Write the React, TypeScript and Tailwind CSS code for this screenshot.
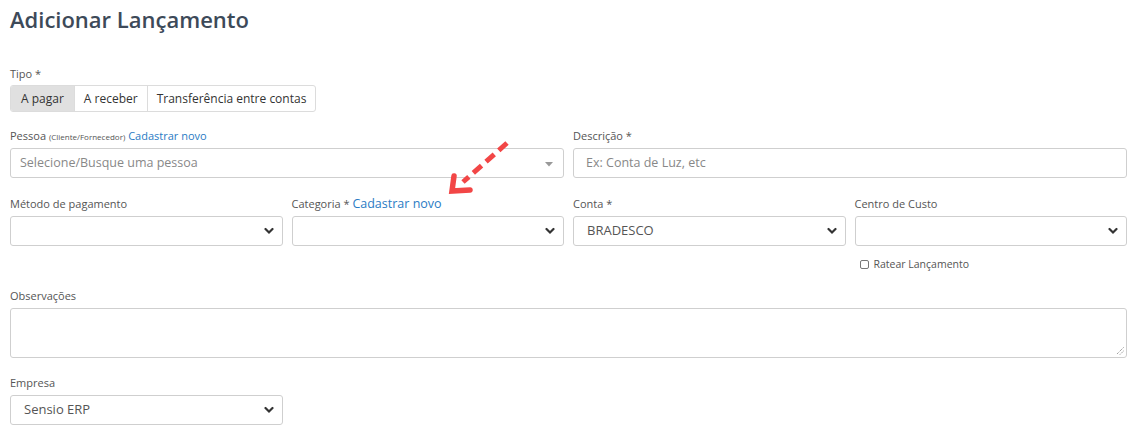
import React from "react";

function Chevron() {
  return (
    <svg width="10" height="7" viewBox="0 0 10 7" className="absolute right-[8px] top-1/2 -translate-y-1/2">
      <path d="M1.5 1.5 L5 5 L8.5 1.5" fill="none" stroke="#333" strokeWidth="2.2" strokeLinecap="round" />
    </svg>
  );
}

function Select({ value }: { value?: string }) {
  return (
    <div className="relative h-[30px] w-full rounded-[3px] border border-[#cfcfcf] bg-white">
      <span className="absolute left-[13px] top-1/2 -translate-y-1/2 text-[13px] font-normal text-[#555]">{value}</span>
      <Chevron />
    </div>
  );
}

function Label({ children }: { children: React.ReactNode }) {
  return <div className="mb-[5px] h-[14px] text-[11px] leading-[14px] text-[#555]">{children}</div>;
}

export default function App() {
  return (
    <div className="min-h-[441px] bg-white pl-[10px] pr-[7px] pt-[3px]" style={{ fontFamily: '"Open Sans", "Noto Sans", sans-serif' }}>
      <h1 className="text-[22px] font-semibold leading-[32px] text-[#3d4a59]">Adicionar Lançamento</h1>

      <div className="mt-[32px]">
        <Label>Tipo *</Label>
        <div className="-mt-[1px] flex h-[27px] w-fit overflow-hidden rounded-[3px] border border-[#dcdcdc] text-[12px] text-[#333]">
          <div className="flex items-center bg-[#e0e0e0] px-[10px]">A pagar</div>
          <div className="flex items-center border-l border-[#dcdcdc] px-[9px]">A receber</div>
          <div className="flex items-center border-l border-[#dcdcdc] px-[9px]">Transferência entre contas</div>
        </div>
      </div>

      <div className="relative mt-[17px] grid grid-cols-2 gap-x-[9px]">
        <div>
          <Label>
            Pessoa <span className="text-[8px]">(Cliente/Fornecedor)</span>{" "}
            <span className="text-[#2a7bc4]">Cadastrar novo</span>
          </Label>
          <div className="relative h-[30px] rounded-[3px] border border-[#cfcfcf] bg-white">
            <span className="absolute left-[9px] top-1/2 -translate-y-1/2 text-[12.5px] text-[#888]">Selecione/Busque uma pessoa</span>
            <svg width="8" height="5" viewBox="0 0 8 5" className="absolute right-[10px] top-[13px]">
              <path d="M0 0 H8 L4 4.5 Z" fill="#999" />
            </svg>
          </div>
        </div>
        <div>
          <Label>Descrição *</Label>
          <div className="relative h-[30px] rounded-[3px] border border-[#cfcfcf] bg-white">
            <span className="absolute left-[12px] top-1/2 -translate-y-1/2 text-[12.5px] text-[#888]">Ex: Conta de Luz, etc</span>
          </div>
        </div>

        {/* seta vermelha apontando pro "Cadastrar novo" da categoria */}
        <svg width="80" height="75" viewBox="0 0 80 75" className="pointer-events-none absolute left-[426px] top-0">
          <line x1="71" y1="14" x2="27" y2="53" stroke="#f24646" strokeWidth="5" strokeDasharray="11 6" strokeLinecap="butt" />
          <path d="M18 47 L16 62 L34 61" fill="none" stroke="#f24646" strokeWidth="5.5" strokeLinejoin="miter" strokeLinecap="round" />
        </svg>
      </div>

      <div className="mt-[19px] grid grid-cols-4 gap-x-[9px]">
        <div>
          <Label>Método de pagamento</Label>
          <Select />
        </div>
        <div>
          <div className="mb-[5px] -mt-[1px] h-[15px] text-[11px] leading-[15px] text-[#555]">
            Categoria * <span className="text-[12.5px] text-[#2a7bc4]">Cadastrar novo</span>
          </div>
          <Select />
        </div>
        <div>
          <Label>Conta *</Label>
          <Select value="BRADESCO" />
        </div>
        <div>
          <Label>Centro de Custo</Label>
          <Select />
          <div className="mt-[11px] flex items-center gap-[5px] pl-[5px] text-[10.5px] text-[#555]">
            <span className="inline-block h-[9px] w-[9px] rounded-[2px] border border-[#777]" />
            Ratear Lançamento
          </div>
        </div>
      </div>

      <div className="mt-[16px]">
        <Label>Observações</Label>
        <div className="relative h-[50px] rounded-[3px] border border-[#cfcfcf] bg-white">
          <svg width="8" height="8" viewBox="0 0 8 8" className="absolute bottom-[2px] right-[2px]">
            <path d="M7.5 0.5 L0.5 7.5 M7.5 4 L4 7.5" stroke="#777" strokeWidth="1" strokeDasharray="1 1" />
          </svg>
        </div>
      </div>

      <div className="mt-[18px] w-[273px]">
        <Label>Empresa</Label>
        <Select value="Sensio ERP" />
      </div>
    </div>
  );
}
